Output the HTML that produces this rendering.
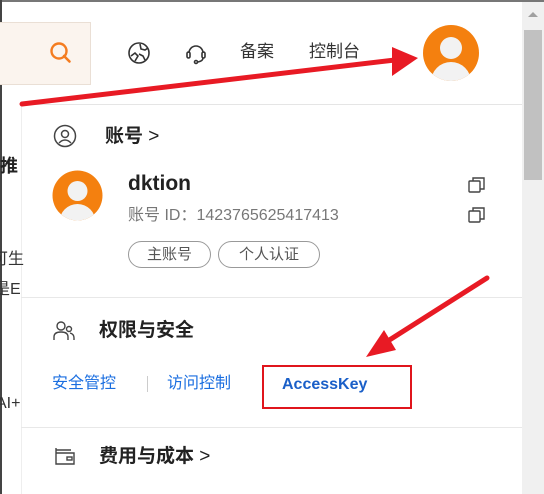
<!DOCTYPE html>
<html><head><meta charset="utf-8"><style>
body{margin:0;width:544px;height:494px;overflow:hidden;background:#fff;font-family:"Liberation Sans","Noto Sans CJK SC",sans-serif;position:relative}
.a{position:absolute;white-space:nowrap}
.tag{position:absolute;top:241px;height:25px;border:1px solid #999;border-radius:14px;font-size:15px;color:#555;line-height:25px;text-align:center}
.lk{color:#1a6ee0;font-size:16px;top:373px;line-height:22px}
</style></head><body>
<div class="a" style="left:0;top:104px;width:21px;height:390px;background:#fff;border-right:1px solid #eee"></div>
<div class="a" style="left:0;top:0;width:544px;height:2px;background:#777"></div>
<div class="a" style="left:0;top:0;width:2px;height:494px;background:#444"></div>
<div class="a" style="left:0;top:22px;width:90px;height:61px;background:#fbf4ee;border:1px solid #eadfd5;border-left:none"></div>
<svg class="a" style="left:48px;top:40px" width="26" height="26"><circle cx="11" cy="11" r="7.5" fill="none" stroke="#f47c20" stroke-width="2.4"/><path d="M16 16l5.5 5.5" stroke="#f47c20" stroke-width="2.6" stroke-linecap="round"/></svg>
<svg class="a" style="left:127px;top:41px" width="24" height="24" fill="none" stroke="#333" stroke-width="1.6"><circle cx="12" cy="12" r="10"/><path d="M4 15l4-3 3 3-3 5M13 3l1 5 4 1 3-2M12 13l4 2 2 4"/></svg>
<svg class="a" style="left:184px;top:41px" width="24" height="24" fill="none" stroke="#333" stroke-width="1.6"><path d="M5 12a7 7 0 0 1 14 0"/><rect x="3" y="11" width="3" height="6" rx="1.5"/><rect x="18" y="11" width="3" height="6" rx="1.5"/><path d="M19 17q0 3-5 4"/><circle cx="12" cy="21" r="1.5"/></svg>
<div class="a" style="left:240px;top:40px;font-size:17px;line-height:24px;color:#333">备案</div>
<div class="a" style="left:309px;top:40px;font-size:17px;line-height:24px;color:#333">控制台</div>
<svg class="a" style="left:422px;top:24px" width="58" height="58"><defs><clipPath id="c1"><circle cx="29" cy="29" r="28"/></clipPath></defs><circle cx="29" cy="29" r="28" fill="#f4800f"/><g clip-path="url(#c1)"><circle cx="29" cy="24" r="11" fill="#f2f2f2"/><ellipse cx="29" cy="58" rx="20" ry="20" fill="#f2f2f2"/></g></svg>
<div class="a" style="left:522px;top:2px;width:22px;height:492px;background:#f0f0f0"></div>
<div class="a" style="left:524px;top:30px;width:18px;height:150px;background:#c1c1c1"></div>
<div class="a" style="left:528px;top:12px;width:0;height:0;border-left:5px solid transparent;border-right:5px solid transparent;border-bottom:5px solid #a0a0a0"></div>
<div class="a" style="left:20px;top:104px;width:502px;height:1px;background:#e5e5e5"></div>
<div class="a" style="left:0;top:152px;font-size:18px;font-weight:bold;color:#222">推</div>
<div class="a" style="left:-8px;top:245px;font-size:16px;color:#333">可生</div>
<div class="a" style="left:-6px;top:275px;font-size:16px;color:#333">是E</div>
<div class="a" style="left:-4px;top:395px;font-size:16px;color:#333">AI+</div>
<svg class="a" style="left:53px;top:124px" width="24" height="24" fill="none" stroke="#444" stroke-width="1.5"><circle cx="12" cy="12" r="10.5"/><circle cx="12" cy="10" r="3.5"/><path d="M6 19q6-6 12 0"/></svg>
<div class="a" style="left:105px;top:124px;font-size:19px;line-height:26px;font-weight:bold;color:#222">账号 <span style="font-weight:normal">&gt;</span></div>
<svg class="a" style="left:52px;top:170px" width="51" height="51"><defs><clipPath id="c2"><circle cx="25.5" cy="25.5" r="25"/></clipPath></defs><circle cx="25.5" cy="25.5" r="25" fill="#f4800f"/><g clip-path="url(#c2)"><circle cx="25.5" cy="21" r="10" fill="#f2f2f2"/><ellipse cx="25.5" cy="52" rx="18" ry="18" fill="#f2f2f2"/></g></svg>
<div class="a" style="left:128px;top:171px;font-size:21px;line-height:26px;font-weight:bold;color:#222">dktion</div>
<div class="a" style="left:128px;top:205px;font-size:16px;line-height:22px;color:#777">账号 ID：1423765625417413</div>
<svg class="a" style="left:468px;top:176px" width="18" height="18" fill="none" stroke="#444" stroke-width="1.4"><rect x="1" y="5" width="11" height="11" rx="1"/><path d="M5 5V2h11v11h-4"/></svg>
<svg class="a" style="left:468px;top:206px" width="18" height="18" fill="none" stroke="#444" stroke-width="1.4"><rect x="1" y="5" width="11" height="11" rx="1"/><path d="M5 5V2h11v11h-4"/></svg>
<div class="tag" style="left:128px;width:81px">主账号</div>
<div class="tag" style="left:218px;width:100px">个人认证</div>
<div class="a" style="left:21px;top:297px;width:501px;height:1px;background:#e8e8e8"></div>
<svg class="a" style="left:53px;top:320px" width="22" height="22" fill="none" stroke="#444" stroke-width="1.4"><circle cx="8" cy="6" r="4"/><path d="M1 20v-3q0-5 7-5t7 5v3"/><circle cx="16" cy="9" r="2.5"/><path d="M17 13q4 1 4 5v2"/></svg>
<div class="a" style="left:99px;top:318px;font-size:19px;line-height:26px;font-weight:bold;color:#222">权限与安全</div>
<div class="a lk" style="left:52px">安全管控</div>
<div class="a" style="left:147px;top:376px;width:1px;height:16px;background:#ccc"></div>
<div class="a lk" style="left:167px">访问控制</div>
<div class="a lk" style="left:282px;font-weight:bold;color:#1a5fc8;top:374px">AccessKey</div>
<div class="a" style="left:262px;top:365px;width:146px;height:40px;border:2px solid #e0151c"></div>
<div class="a" style="left:21px;top:427px;width:501px;height:1px;background:#e8e8e8"></div>
<svg class="a" style="left:54px;top:446px" width="22" height="20" fill="none" stroke="#444" stroke-width="1.4"><path d="M2 4h15M2 2v16h18V7H2"/><rect x="13" y="11" width="5" height="3"/></svg>
<div class="a" style="left:99px;top:444px;font-size:19px;line-height:26px;font-weight:bold;color:#222">费用与成本 <span style="font-weight:normal">&gt;</span></div>
<svg class="a" style="left:0;top:0" width="544" height="494"><path d="M22 104L395 60" stroke="#e81a24" stroke-width="5" stroke-linecap="round"/><path d="M392 47L418 58L392 76Z" fill="#e81a24"/><path d="M487 278L380 346" stroke="#e81a24" stroke-width="5" stroke-linecap="round"/><path d="M366 357L384 330L396 350Z" fill="#e81a24"/></svg>
</body></html>
